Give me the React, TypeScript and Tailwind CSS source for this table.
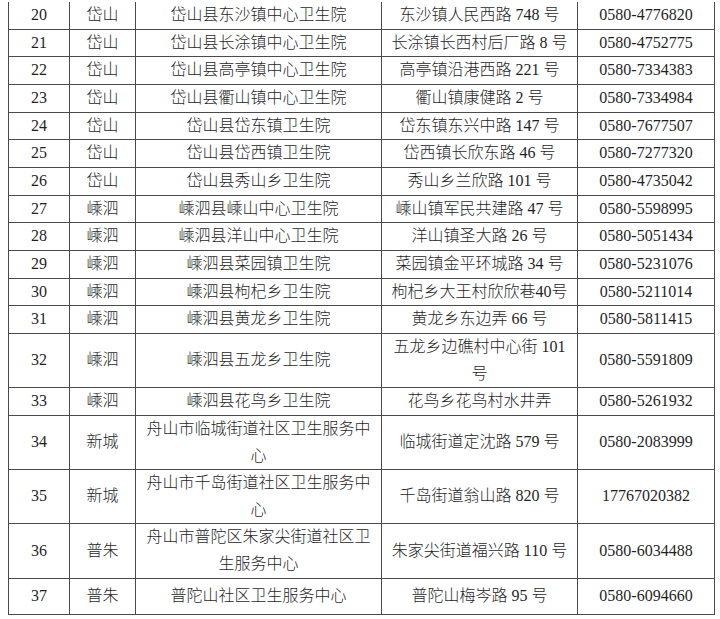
import React from 'react';

interface Clinic {
  no: number;
  area: string;
  name: string;
  addr: string;
  phone: string;
}

const clinics: Clinic[] = [
  { no: 20, area: '岱山', name: '岱山县东沙镇中心卫生院', addr: '东沙镇人民西路 748 号', phone: '0580-4776820' },
  { no: 21, area: '岱山', name: '岱山县长涂镇中心卫生院', addr: '长涂镇长西村后厂路 8 号', phone: '0580-4752775' },
  { no: 22, area: '岱山', name: '岱山县高亭镇中心卫生院', addr: '高亭镇沿港西路 221 号', phone: '0580-7334383' },
  { no: 23, area: '岱山', name: '岱山县衢山镇中心卫生院', addr: '衢山镇康健路 2 号', phone: '0580-7334984' },
  { no: 24, area: '岱山', name: '岱山县岱东镇卫生院', addr: '岱东镇东兴中路 147 号', phone: '0580-7677507' },
  { no: 25, area: '岱山', name: '岱山县岱西镇卫生院', addr: '岱西镇长欣东路 46 号', phone: '0580-7277320' },
  { no: 26, area: '岱山', name: '岱山县秀山乡卫生院', addr: '秀山乡兰欣路 101 号', phone: '0580-4735042' },
  { no: 27, area: '嵊泗', name: '嵊泗县嵊山中心卫生院', addr: '嵊山镇军民共建路 47 号', phone: '0580-5598995' },
  { no: 28, area: '嵊泗', name: '嵊泗县洋山中心卫生院', addr: '洋山镇圣大路 26 号', phone: '0580-5051434' },
  { no: 29, area: '嵊泗', name: '嵊泗县菜园镇卫生院', addr: '菜园镇金平环城路 34 号', phone: '0580-5231076' },
  { no: 30, area: '嵊泗', name: '嵊泗县枸杞乡卫生院', addr: '枸杞乡大王村欣欣巷40号', phone: '0580-5211014' },
  { no: 31, area: '嵊泗', name: '嵊泗县黄龙乡卫生院', addr: '黄龙乡东边弄 66 号', phone: '0580-5811415' },
  { no: 32, area: '嵊泗', name: '嵊泗县五龙乡卫生院', addr: '五龙乡边礁村中心街 101 号', phone: '0580-5591809' },
  { no: 33, area: '嵊泗', name: '嵊泗县花鸟乡卫生院', addr: '花鸟乡花鸟村水井弄', phone: '0580-5261932' },
  { no: 34, area: '新城', name: '舟山市临城街道社区卫生服务中心', addr: '临城街道定沈路 579 号', phone: '0580-2083999' },
  { no: 35, area: '新城', name: '舟山市千岛街道社区卫生服务中心', addr: '千岛街道翁山路 820 号', phone: '17767020382' },
  { no: 36, area: '普朱', name: '舟山市普陀区朱家尖街道社区卫生服务中心', addr: '朱家尖街道福兴路 110 号', phone: '0580-6034488' },
  { no: 37, area: '普朱', name: '普陀山社区卫生服务中心', addr: '普陀山梅岑路 95 号', phone: '0580-6094660' },
];

export default function App() {
  return (
    <div
      className="w-[720px] h-[619px] bg-white pl-[8px] pt-[2px] overflow-hidden text-[16px] text-[#1f1f1f]"
      style={{ fontFamily: '"Liberation Serif", "Noto Sans CJK SC", serif' }}
    >
      {/* table continues from the previous page, so no top border */}
      <div className="w-[707px] grid grid-cols-[60px_65px_245px_195px_136px] gap-px bg-[#4a4a4a] border-x border-b border-[#4a4a4a]">
        {clinics.map((c) => {
          const last = c.no === 37;
          const cell = `bg-white flex items-center justify-center text-center px-[4px] font-light leading-[26.65px] ${
            last ? 'min-h-[35px]' : 'min-h-[26.65px]'
          }`;
          return (
            <React.Fragment key={c.no}>
              <div className={cell}>{c.no}</div>
              <div className={cell}>{c.area}</div>
              <div className={cell}>{c.name}</div>
              <div className={cell}>{c.addr}</div>
              <div className={cell}>{c.phone}</div>
            </React.Fragment>
          );
        })}
      </div>
    </div>
  );
}
